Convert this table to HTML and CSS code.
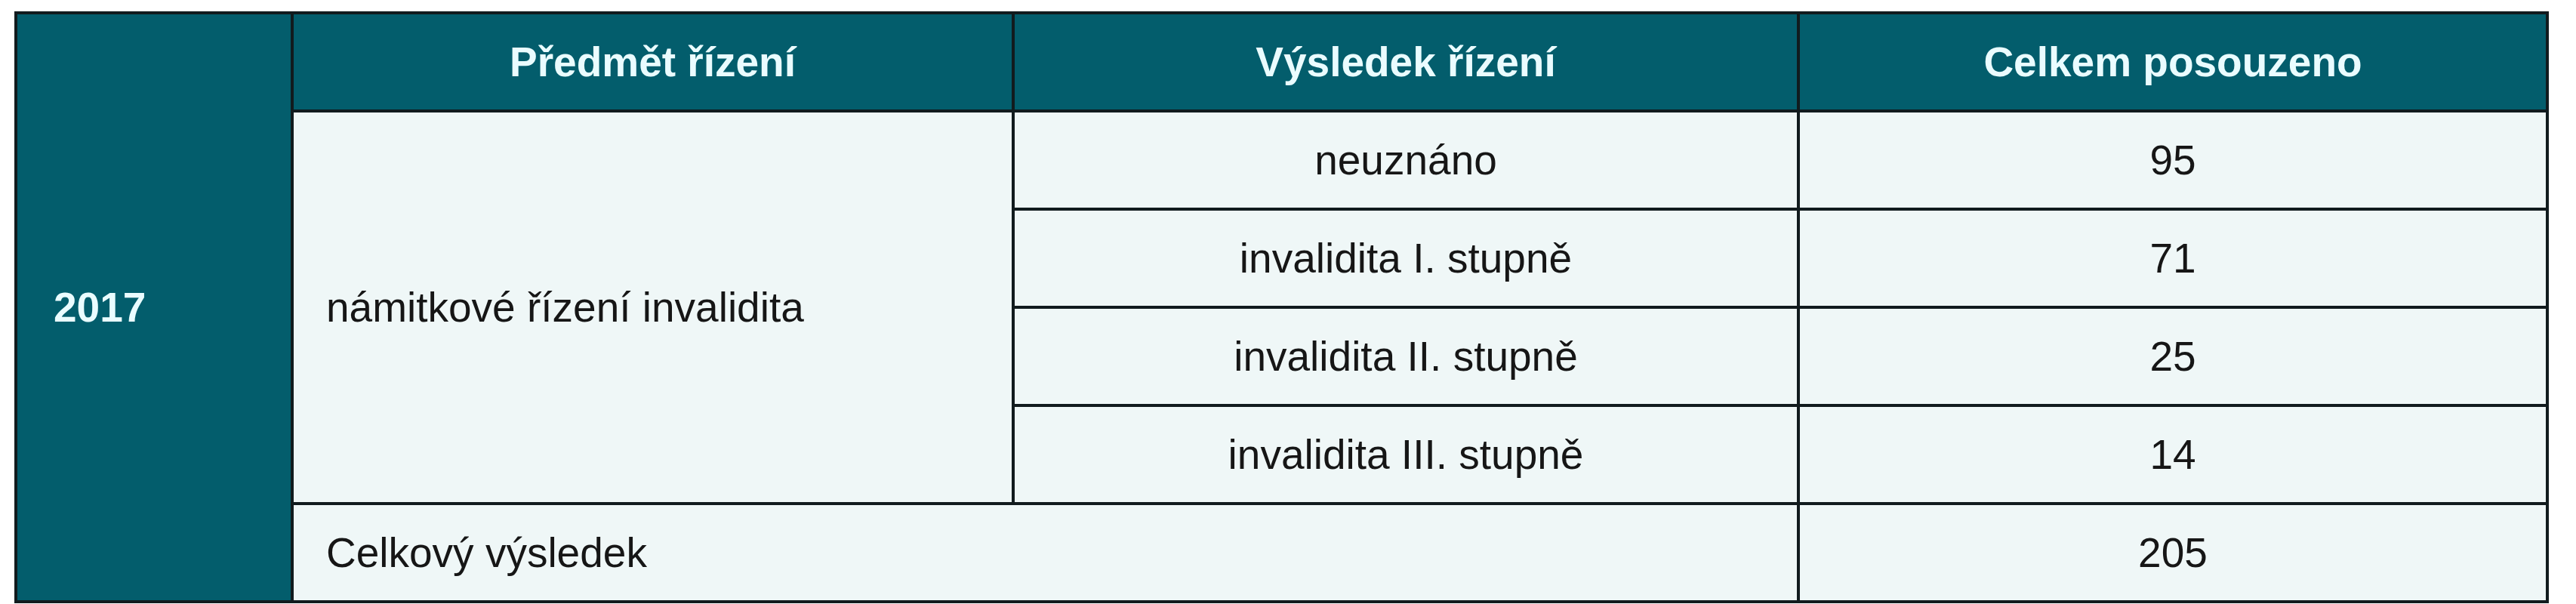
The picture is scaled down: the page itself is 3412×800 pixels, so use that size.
FILE: index.html
```html
<!DOCTYPE html>
<html lang="cs">
<head>
<meta charset="utf-8">
<title>Námitkové řízení 2017</title>
<link rel="stylesheet" href="styles.css">
</head>
<body>
<div class="sheet">
  <div class="grid">
    <div class="cell year">2017</div>
    <div class="cell head">Předmět řízení</div>
    <div class="cell head">Výsledek řízení</div>
    <div class="cell head">Celkem posouzeno</div>

    <div class="cell subject">námitkové řízení invalidita</div>
    <div class="cell center">neuznáno</div>
    <div class="cell center">95</div>
    <div class="cell center">invalidita I. stupně</div>
    <div class="cell center">71</div>
    <div class="cell center">invalidita II. stupně</div>
    <div class="cell center">25</div>
    <div class="cell center">invalidita III. stupně</div>
    <div class="cell center">14</div>

    <div class="cell total">Celkový výsledek</div>
    <div class="cell center">205</div>
  </div>
</div>
</body>
</html>
```

FILE: styles.css
```css
html, body {
  margin: 0;
  padding: 0;
  background: #ffffff;
}

.sheet {
  padding: 15px 0 0 19px;
}

.grid {
  display: grid;
  width: 3357px;
  box-sizing: border-box;
  grid-template-columns: 362px 951px 1036px 988px;
  grid-template-rows: repeat(6, 126px);
  gap: 4px;
  padding: 4px;
  background: #111b1e;
  font-family: "Liberation Sans", Arial, sans-serif;
  font-size: 55px;
  color: #161616;
}

.cell {
  display: flex;
  align-items: center;
  background: #eff7f7;
  white-space: nowrap;
}

.center {
  justify-content: center;
}

.year {
  grid-column: 1;
  grid-row: 1 / span 6;
  background: #035d6c;
  color: #eafcff;
  font-weight: bold;
  padding-left: 48px;
}

.head {
  background: #035d6c;
  color: #eafcff;
  font-weight: bold;
  justify-content: center;
}

.subject {
  grid-column: 2;
  grid-row: 2 / span 4;
  padding-left: 43px;
}

.total {
  grid-column: 2 / span 2;
  padding-left: 43px;
}
```
